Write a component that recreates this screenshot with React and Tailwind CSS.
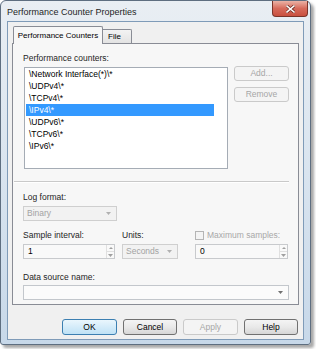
import React from 'react';

const counters = [
  '\\Network Interface(*)\\*',
  '\\UDPv4\\*',
  '\\TCPv4\\*',
  '\\IPv4\\*',
  '\\UDPv6\\*',
  '\\TCPv6\\*',
  '\\IPv6\\*',
];

function Arrow({ color = '#8a8a8a' }) {
  return (
    <svg width="5" height="3" viewBox="0 0 5 3">
      <path d="M0 0 L5 0 L2.5 3 Z" fill={color} />
    </svg>
  );
}

function Btn({ children, w, disabled, primary }) {
  const look = disabled
    ? 'border-[#cacaca] bg-[#f4f4f4] text-[#a6a6a6]'
    : primary
    ? 'border-[#3c7fb1] bg-gradient-to-b from-[#eaf6fd] to-[#bfe2f6] text-black'
    : 'border-[#707070] bg-gradient-to-b from-[#f4f4f4] via-[#e9e9e9] to-[#d6d6d6] text-black';
  return (
    <div className={`${w} h-[16px] rounded-[3px] border ${look} flex items-center justify-center text-[8.5px] leading-none`}>
      {children}
    </div>
  );
}

function Combo({ w, text, disabled }) {
  return (
    <div
      className={`${w} h-[15px] border flex items-center justify-between pl-[3px] pr-[5px] text-[8.5px] leading-none ${
        disabled ? 'border-[#cfcfcf] bg-[#f2f2f2] text-[#a3a3a3]' : 'border-[#c3c7cc] bg-[#fbfbfb] text-black'
      }`}
    >
      <span>{text}</span>
      <Arrow color={disabled ? '#b0b0b0' : '#707070'} />
    </div>
  );
}

function Spin({ w, value }) {
  return (
    <div className={`${w} h-[15px] border border-[#c8cacd] bg-[#f9f9f9] flex items-stretch text-[8.5px] leading-none`}>
      <div className="flex-1 flex items-center pl-[4px] text-black">{value}</div>
      <div className="w-[8px] flex flex-col border-l border-[#e0e0e0]">
        <div className="flex-1 flex items-center justify-center border-b border-[#e0e0e0]">
          <svg width="4" height="2" viewBox="0 0 4 2"><path d="M0 2 L4 2 L2 0 Z" fill="#a0a0a0" /></svg>
        </div>
        <div className="flex-1 flex items-center justify-center">
          <Arrow color="#a0a0a0" />
        </div>
      </div>
    </div>
  );
}

function Label({ children, className = '' }) {
  return <div className={`h-[10px] text-[8.5px] leading-[10px] text-[#1e1e1e] ${className}`}>{children}</div>;
}

export default function App() {
  return (
    <div className="w-[316px] h-[349px] bg-white overflow-hidden font-['Liberation_Sans',Arial,sans-serif]">
      <div className="w-[311px] h-[345px] rounded-t-[6px] rounded-b-[3px] border border-[#5e6e80] bg-gradient-to-b from-[#e9eef3] via-[#d9e4ef] to-[#c7d8e9] shadow-[3px_3px_3px_rgba(0,0,0,0.35)] flex flex-col">
        {/* title bar */}
        <div className="h-[20px] relative flex items-center pl-[6px] pt-[2px]">
          <span className="text-[9px] leading-none text-[#1f1f1f]">Performance Counter Properties</span>
          <div className="absolute right-[2px] top-0 w-[36px] h-[16px] rounded-b-[4px] border border-t-0 border-[#7a3429] bg-gradient-to-b from-[#eab2a6] via-[#d66a5b] to-[#c9503f] flex items-center justify-center">
            <svg width="9" height="8" viewBox="0 0 9 8">
              <path d="M1 1 L8 7 M8 1 L1 7" stroke="#6a2a20" strokeWidth="3" strokeLinecap="square" />
              <path d="M1 1 L8 7 M8 1 L1 7" stroke="#ffffff" strokeWidth="1.6" strokeLinecap="square" />
            </svg>
          </div>
        </div>

        {/* client area */}
        <div className="mx-[6px] mb-[4px] flex-1 border border-[#7f9bb8] bg-[#f0f0f0] flex flex-col">
          <div className="px-[4px] pt-[4px]">
            {/* tabs */}
            <div className="flex items-end pl-[1px] -mb-px">
              <div className="relative z-10 w-[90px] h-[18px] border border-b-0 border-[#898c95] rounded-t-[2px] bg-[#f7f7f7] flex items-center justify-center text-[8px] leading-none text-black">
                Performance Counters
              </div>
              <div className="w-[29px] h-[14px] mb-px border border-l-0 border-b-0 border-[#898c95] rounded-tr-[2px] bg-gradient-to-b from-[#f3f3f3] to-[#e3e3e3] flex items-center pl-[5px] text-[8px] leading-none text-black">
                File
              </div>
            </div>

            {/* panel */}
            <div className="w-[287px] h-[262px] border border-[#898c95] bg-[#f7f7f7] flex flex-col">
              <div className="flex items-start pl-[10px] pt-[9px]">
                <div className="flex flex-col">
                  <Label>Performance counters:</Label>
                  <div className="ml-[1px] mt-[4px] w-[204px] h-[102px] border border-[#a5acb5] bg-white">
                    {counters.map((c, i) => (
                      <div
                        key={c}
                        className={`ml-[1px] w-[188px] h-[12px] pl-[3px] text-[8.5px] leading-[12px] whitespace-nowrap ${
                          i === 3 ? 'bg-[#3399ff] text-white' : 'text-black'
                        }`}
                      >
                        {c}
                      </div>
                    ))}
                  </div>
                </div>
                <div className="ml-[6px] mt-[13px] flex flex-col gap-[6px]">
                  <div className="w-[55px] h-[15px] rounded-[3px] border border-[#cacaca] bg-[#f4f4f4] text-[#a6a6a6] flex items-center justify-center text-[8.5px] leading-none">
                    Add...
                  </div>
                  <div className="w-[55px] h-[15px] rounded-[3px] border border-[#cacaca] bg-[#f4f4f4] text-[#a6a6a6] flex items-center justify-center text-[8.5px] leading-none">
                    Remove
                  </div>
                </div>
              </div>

              {/* separator */}
              <div className="mt-[12px] ml-[1px] mr-[9px] h-[2px] border-t border-[#c9c9c9] border-b border-b-white" />

              <div className="pl-[10px] pt-[9px]">
                <Label>Log format:</Label>
                <div className="mt-[4px]">
                  <Combo w="w-[94px]" text="Binary" disabled />
                </div>

                <div className="mt-[9px] flex items-start">
                  <div className="w-[99px] flex flex-col">
                    <Label>Sample interval:</Label>
                    <div className="mt-[4px]">
                      <Spin w="w-[92px]" value="1" />
                    </div>
                  </div>
                  <div className="w-[73px] flex flex-col">
                    <Label>Units:</Label>
                    <div className="mt-[4px]">
                      <Combo w="w-[56px]" text="Seconds" disabled />
                    </div>
                  </div>
                  <div className="flex flex-col">
                    <div className="h-[10px] flex items-center gap-[3px]">
                      <div className="w-[9px] h-[9px] border border-[#b5b5b5] bg-[#f4f4f4]" />
                      <span className="text-[8.5px] leading-none text-[#a8a8a8]">Maximum samples:</span>
                    </div>
                    <div className="mt-[4px]">
                      <Spin w="w-[93px]" value="0" />
                    </div>
                  </div>
                </div>

                <Label className="mt-[13px]">Data source name:</Label>
                <div className="mt-[3px]">
                  <Combo w="w-[266px]" text="" />
                </div>
              </div>
            </div>
          </div>

          {/* dialog buttons */}
          <div className="mt-[14px] flex justify-end gap-[6px] pr-[5px]">
            <Btn w="w-[55px]" primary>OK</Btn>
            <Btn w="w-[54px]">Cancel</Btn>
            <Btn w="w-[55px]" disabled>Apply</Btn>
            <Btn w="w-[54px]">Help</Btn>
          </div>
        </div>
      </div>
    </div>
  );
}
